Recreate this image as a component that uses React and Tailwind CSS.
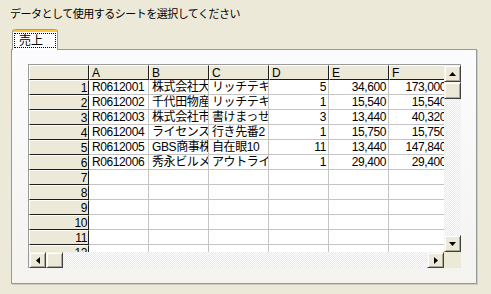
const columns = ["A", "B", "C", "D", "E", "F"];

const rows = [
  ["R0612001", "株式会社大阪商会", "リッチテキストエディタ", "5", "34,600", "173,000"],
  ["R0612002", "千代田物産株式会社", "リッチテキストエディタ", "1", "15,540", "15,540"],
  ["R0612003", "株式会社市川システム", "書けまっせ", "3", "13,440", "40,320"],
  ["R0612004", "ライセンスオンライン", "行き先番2", "1", "15,750", "15,750"],
  ["R0612005", "GBS商事株式会社", "自在眼10", "11", "13,440", "147,840"],
  ["R0612006", "秀永ビルメンテナンス", "アウトライナ", "1", "29,400", "29,400"],
];

const alignRight = [false, false, false, true, true, true];

const hatch =
  "bg-[repeating-conic-gradient(#ffffff_0%_25%,#ece9d8_0%_50%)] bg-[length:2px_2px]";

function Arrow({ dir }) {
  if (dir === "up") {
    return (
      <svg width="7" height="4" viewBox="0 0 7 4">
        <path d="M3.5 0 L7 4 L0 4 Z" fill="#000" />
      </svg>
    );
  }
  if (dir === "down") {
    return (
      <svg width="7" height="4" viewBox="0 0 7 4">
        <path d="M0 0 L7 0 L3.5 4 Z" fill="#000" />
      </svg>
    );
  }
  if (dir === "left") {
    return (
      <svg width="4" height="7" viewBox="0 0 4 7">
        <path d="M4 0 L4 7 L0 3.5 Z" fill="#000" />
      </svg>
    );
  }
  return (
    <svg width="4" height="7" viewBox="0 0 4 7">
      <path d="M0 0 L4 3.5 L0 7 Z" fill="#000" />
    </svg>
  );
}

function ScrollButton({ dir, className = "" }) {
  return (
    <div
      className={`flex shrink-0 items-center justify-center border border-t-[#f4f3ee] border-l-[#f4f3ee] border-r-[#404040] border-b-[#404040] bg-[#ece9d8] shadow-[inset_1px_1px_0_#ffffff,inset_-1px_-1px_0_#aca899] ${className}`}
    >
      {dir && <Arrow dir={dir} />}
    </div>
  );
}

function HeaderCell({ children, right }) {
  return (
    <div
      className={`flex h-[15px] w-[60px] shrink-0 items-center overflow-hidden whitespace-nowrap border border-t-white border-l-white border-r-[#1c1c1c] border-b-[#1c1c1c] bg-[#ece9d8] ${
        right ? "justify-end pr-[1px]" : "pl-[2px]"
      }`}
    >
      {children}
    </div>
  );
}

function Cell({ children, right }) {
  return (
    <div
      className={`flex h-[15px] w-[60px] shrink-0 items-center overflow-hidden whitespace-nowrap border-r border-b border-[#c4c4c4] bg-white ${
        right ? "justify-end pr-[2px]" : "pl-[3px]"
      }`}
    >
      {children}
    </div>
  );
}

export default function App() {
  const allRows = Array.from({ length: 12 }, (_, i) => rows[i] || ["", "", "", "", "", ""]);

  return (
    <main
      className="h-[294px] w-[491px] overflow-hidden bg-[#ece9d8] pt-[7px] text-black"
      style={{
        fontFamily: '"Liberation Sans", "Noto Sans CJK JP", sans-serif',
      }}
    >
      <p className="pl-[10px] text-[11px] leading-[14px] tracking-[-0.5px]">
        データとして使用するシートを選択してください
      </p>

      <div className="mt-[8px] flex pl-[12px]">
        <div className="relative z-10 -mb-[1px] flex h-[21px] w-[46px] flex-col rounded-t-[3px] border-x border-[#919b9c] bg-white">
          <div className="h-[3px] w-full rounded-t-[3px] border-t border-[#e68b2c] bg-[#ffc73c]" />
          <div className="mx-[1px] mt-[1px] flex h-[15px] items-center border border-dotted border-black pl-[4px] text-[12px] leading-[14px]">
            売上
          </div>
        </div>
      </div>

      <section className="ml-[11px] h-[235px] w-[466px] border border-[#919b9c] bg-gradient-to-b from-[#fcfcfe] to-[#f4f3ee] pl-[16px] pt-[14px] shadow-[1px_1px_0_#d0cdbf]">
        <div className="flex h-[204px] w-[433px] flex-col border-l border-t border-[#9a9a9a] text-[12px] leading-[14px] tracking-[-0.4px]">
          <div className="flex h-[187px]">
            <div className="w-[415px] overflow-hidden">
              <div className="flex w-[420px]">
                <HeaderCell />
                {columns.map((c) => (
                  <HeaderCell key={c}>{c}</HeaderCell>
                ))}
              </div>
              {allRows.map((r, i) => (
                <div key={i} className="flex w-[420px]">
                  <HeaderCell right>{i + 1}</HeaderCell>
                  {r.map((v, j) => (
                    <Cell key={j} right={alignRight[j]}>
                      {v}
                    </Cell>
                  ))}
                </div>
              ))}
            </div>
            <div className={`flex w-[17px] flex-col ${hatch}`}>
              <ScrollButton dir="up" className="h-[17px] w-[17px]" />
              <ScrollButton className="h-[17px] w-[17px]" />
              <div className="flex-1" />
              <ScrollButton dir="down" className="h-[17px] w-[17px]" />
            </div>
          </div>
          <div className="flex h-[16px]">
            <div className={`flex w-[415px] ${hatch}`}>
              <ScrollButton dir="left" className="h-[16px] w-[17px]" />
              <ScrollButton className="h-[16px] w-[17px]" />
              <div className="flex-1" />
              <ScrollButton dir="right" className="h-[16px] w-[17px]" />
            </div>
            <div className="w-[17px] bg-[#ece9d8]" />
          </div>
        </div>
      </section>
    </main>
  );
}
